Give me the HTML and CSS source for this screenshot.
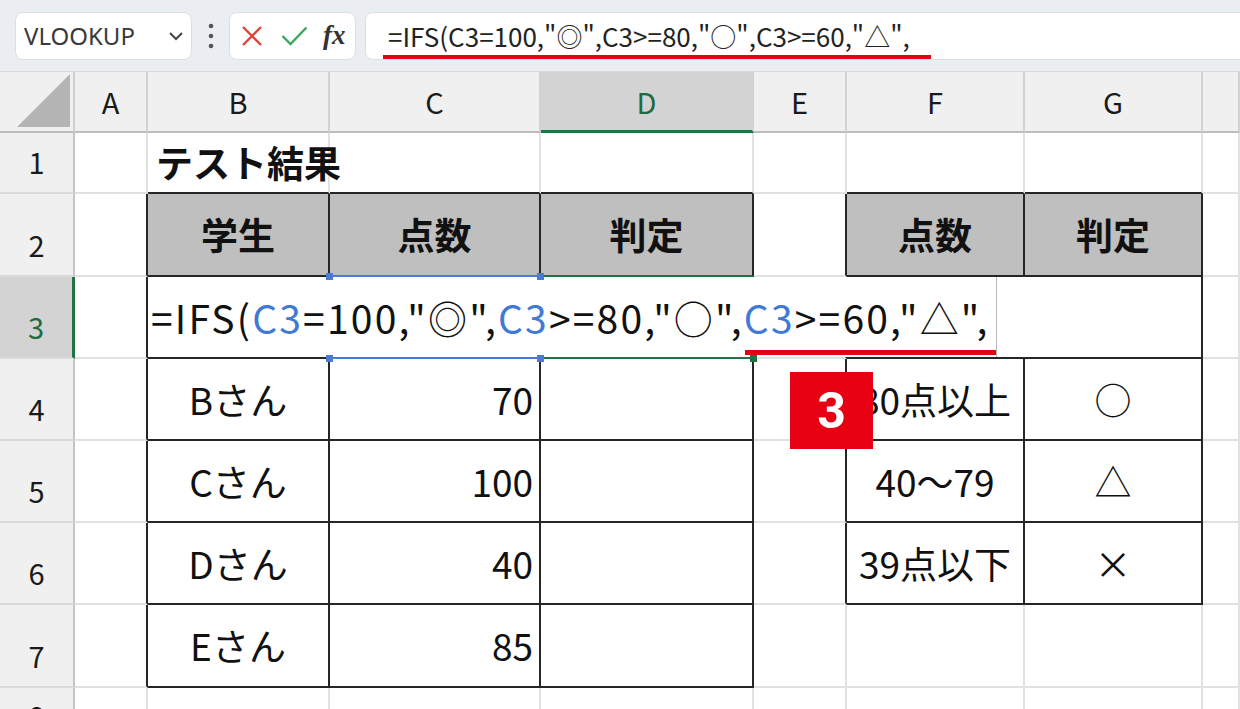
FILE: index.html
```html
<!DOCTYPE html>
<html lang="ja">
<head>
    <meta charset="UTF-8">
    <title>IFS関数 入力中</title>
    <link rel="stylesheet" href="styles.css">
</head>
<body>
    <div class="toolbar">
        <div class="namebox">
            <span>VLOOKUP</span>
            <svg width="16" height="10" viewBox="0 0 16 10"><polyline points="2,2 8,8 14,2" fill="none" stroke="#444" stroke-width="2"/></svg>
        </div>
        <div class="more">
            <svg width="6" height="26" viewBox="0 0 6 26"><circle cx="3" cy="3" r="2.3" fill="#555"/><circle cx="3" cy="13" r="2.3" fill="#555"/><circle cx="3" cy="23" r="2.3" fill="#555"/></svg>
        </div>
        <div class="actions">
            <svg class="ic-x" width="22" height="22" viewBox="0 0 22 22"><path d="M2 2 L20 20 M20 2 L2 20" stroke="#e0453e" stroke-width="2.4" fill="none"/></svg>
            <svg class="ic-ok" width="27" height="20" viewBox="0 0 27 20"><polyline points="1.5,10 9.5,18 25.5,1.5" stroke="#3aa85a" stroke-width="2.4" fill="none"/></svg>
            <span class="fx">fx</span>
        </div>
        <div class="formula">
            <span>=IFS(C3=100,"◎",C3&gt;=80,"○",C3&gt;=60,"△",</span>
            <span class="mark"></span>
        </div>
    </div>

    <div class="sheet">
        <!-- column headers -->
        <div class="c corner"><svg width="53" height="53" viewBox="0 0 53 53"><polygon points="53,0 53,53 0,53" fill="#b4b4b4"/></svg></div>
        <div class="c col">A</div>
        <div class="c col">B</div>
        <div class="c col">C</div>
        <div class="c col sel">D</div>
        <div class="c col">E</div>
        <div class="c col">F</div>
        <div class="c col">G</div>
        <div class="c col"></div>

        <!-- row 1 -->
        <div class="c row">1</div>
        <div class="c"></div>
        <div class="c eb title">テスト結果</div>
        <div class="c eb"></div>
        <div class="c eb"></div>
        <div class="c"></div>
        <div class="c eb"></div>
        <div class="c eb"></div>
        <div class="c"></div>

        <!-- row 2 -->
        <div class="c row">2</div>
        <div class="c er"></div>
        <div class="c t hd">学生</div>
        <div class="c t hd rb">点数</div>
        <div class="c t hd gb">判定</div>
        <div class="c er"></div>
        <div class="c t hd">点数</div>
        <div class="c t hd">判定</div>
        <div class="c"></div>

        <!-- row 3 -->
        <div class="c row sel">3</div>
        <div class="c er"></div>
        <div class="c t"></div>
        <div class="c t rb"></div>
        <div class="c t gb"></div>
        <div class="c er"></div>
        <div class="c t span2"></div>
        <div class="c"></div>

        <!-- row 4 -->
        <div class="c row">4</div>
        <div class="c er"></div>
        <div class="c t">Bさん</div>
        <div class="c t num">70</div>
        <div class="c t"></div>
        <div class="c er"></div>
        <div class="c t">80点以上</div>
        <div class="c t">○</div>
        <div class="c"></div>

        <!-- row 5 -->
        <div class="c row">5</div>
        <div class="c er"></div>
        <div class="c t">Cさん</div>
        <div class="c t num">100</div>
        <div class="c t"></div>
        <div class="c er"></div>
        <div class="c t">40～79</div>
        <div class="c t">△</div>
        <div class="c"></div>

        <!-- row 6 -->
        <div class="c row">6</div>
        <div class="c er"></div>
        <div class="c t">Dさん</div>
        <div class="c t num">40</div>
        <div class="c t"></div>
        <div class="c er"></div>
        <div class="c t">39点以下</div>
        <div class="c t">×</div>
        <div class="c"></div>

        <!-- row 7 -->
        <div class="c row">7</div>
        <div class="c er"></div>
        <div class="c t">Eさん</div>
        <div class="c t num">85</div>
        <div class="c t"></div>
        <div class="c"></div>
        <div class="c"></div>
        <div class="c"></div>
        <div class="c"></div>

        <!-- row 8 -->
        <div class="c row">8</div>
        <div class="c"></div>
        <div class="c"></div>
        <div class="c"></div>
        <div class="c"></div>
        <div class="c"></div>
        <div class="c"></div>
        <div class="c"></div>
        <div class="c"></div>

        <!-- in-cell editor for D3 -->
        <div class="editor">=IFS(<span class="ref">C3</span>=100,"◎",<span class="ref">C3</span>&gt;=80,"○",<span class="ref">C3</span>&gt;=60,"△",<span class="mark"></span></div>

        <span class="hdl" style="left:326px; top:201px"></span>
        <span class="hdl" style="left:537px; top:201px"></span>
        <span class="hdl" style="left:326px; top:283px"></span>
        <span class="hdl" style="left:537px; top:283px"></span>
        <span class="hdl fill" style="left:750px; top:283px"></span>

        <div class="badge">3</div>
    </div>
</body>
</html>
```

FILE: styles.css
```css
* {
    box-sizing: border-box;
}

body {
    margin: 0;
    width: 1240px;
    height: 709px;
    overflow: hidden;
    background: #fff;
    font-family: "Noto Sans CJK JP", "Noto Sans", sans-serif;
    color: #111;
}

/* formula bar */
.toolbar {
    display: flex;
    align-items: center;
    height: 72px;
    padding-left: 15px;
    background: #eaedf1;
    border-bottom: 1px solid #d6d9dd;
}

.namebox {
    width: 177px;
    height: 48px;
    display: flex;
    align-items: center;
    justify-content: space-between;
    padding: 0 7px 0 8px;
    background: #fff;
    border: 1px solid #dadde2;
    border-radius: 8px;
    font-family: "Noto Sans", sans-serif;
    font-size: 24px;
    color: #3a3a3a;
}

.more {
    width: 37px;
    display: flex;
    justify-content: center;
}

.actions {
    width: 127px;
    height: 48px;
    display: flex;
    align-items: center;
    padding-left: 11px;
    background: #fff;
    border: 1px solid #dadde2;
    border-radius: 8px;
}

.ic-x {
    margin-right: 18px;
}

.ic-ok {
    margin-right: 15px;
}

.fx {
    font-family: "Liberation Serif", serif;
    font-style: italic;
    font-weight: bold;
    font-size: 27px;
    color: #333;
}

.formula {
    position: relative;
    flex: 1;
    height: 48px;
    margin-left: 9px;
    margin-right: -20px;
    display: flex;
    align-items: center;
    padding-left: 22px;
    background: #fff;
    border: 1px solid #dadde2;
    border-radius: 8px;
    font-size: 26px;
    color: #222;
    white-space: nowrap;
}

.formula .mark {
    position: absolute;
    left: 17px;
    top: 42px;
    width: 548px;
    height: 4px;
    background: #e60012;
}

/* sheet grid */
.sheet {
    position: relative;
    display: grid;
    grid-template-columns: 75px 73px 182px 211px 213px 93px 178px 178px 1fr;
    grid-template-rows: 61px 61px 83px 82px 82px 82px 82px 83px 60px;
}

.c {
    display: flex;
    align-items: center;
    justify-content: center;
    border-right: 2px solid #e1e1e1;
    border-bottom: 2px solid #e1e1e1;
    font-size: 37px;
    line-height: 1;
    white-space: nowrap;
}

.corner {
    align-items: flex-end;
    justify-content: flex-end;
    padding: 0 3px 4px 0;
    background: #f0f0f0;
    border-right-color: #cfcfcf;
    border-bottom-color: #bdbdbd;
}

.col {
    background: #f0f0f0;
    border-right-color: #d2d2d2;
    border-bottom-color: #bdbdbd;
    font-size: 29px;
    color: #1a1a1a;
}

.col.sel {
    background: #d3d3d3;
    color: #1d6b40;
    border-bottom: 3px solid #217346;
}

.row {
    align-items: flex-end;
    padding-bottom: 16px;
    background: #f0f0f0;
    border-right-color: #c4c4c4;
    border-bottom-color: #dadada;
    font-size: 29px;
    color: #1a1a1a;
}

.row.sel {
    background: #d3d3d3;
    color: #1d6b40;
    border-right: 3px solid #217346;
}

.t {
    border-right-color: #262626;
    border-bottom-color: #262626;
}

.er {
    border-right-color: #262626;
}

.eb {
    border-bottom-color: #262626;
}

.hd {
    background: #bfbfbf;
    font-weight: bold;
}

.title {
    justify-content: flex-start;
    padding-left: 8px;
    font-weight: bold;
}

.num {
    justify-content: flex-end;
    padding-right: 6px;
}

.span2 {
    grid-column: span 2;
}

.rb {
    border-bottom-color: #4a7bd0;
}

.gb {
    border-bottom-color: #217346;
}

/* editing D3 */
.editor {
    position: absolute;
    left: 148px;
    top: 205px;
    width: 849px;
    height: 80px;
    display: flex;
    align-items: center;
    padding-left: 3px;
    background: #fff;
    border-right: 1px solid #b8b8b8;
    font-size: 39px;
    letter-spacing: 2.2px;
    line-height: 1;
    white-space: nowrap;
    z-index: 2;
}

.editor .ref {
    color: #3f7bd6;
}

.editor .mark {
    position: absolute;
    left: 597px;
    bottom: 2px;
    width: 251px;
    height: 5px;
    background: #e60012;
}

.hdl {
    position: absolute;
    width: 7px;
    height: 7px;
    background: #4a7bd0;
    z-index: 3;
}

.hdl.fill {
    background: #217346;
}

.badge {
    position: absolute;
    left: 790px;
    top: 300px;
    width: 83px;
    height: 77px;
    display: flex;
    align-items: center;
    justify-content: center;
    background: #e60012;
    color: #fff;
    font-family: Roboto, "Noto Sans", sans-serif;
    font-weight: bold;
    font-size: 50px;
    z-index: 4;
}
```
